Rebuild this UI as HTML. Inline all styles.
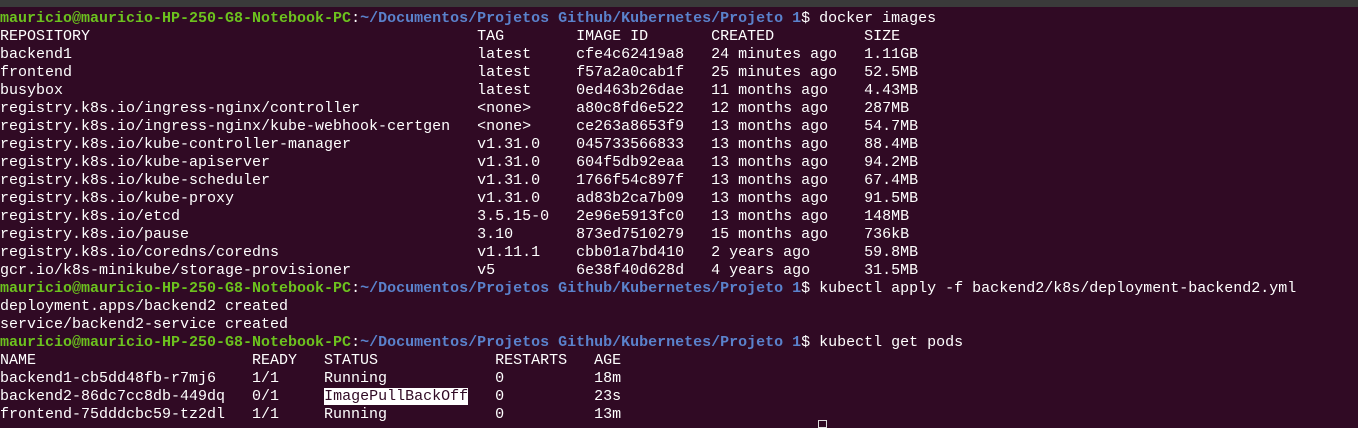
<!DOCTYPE html>
<html><head><meta charset="utf-8"><style>
html,body{margin:0;padding:0;}
body{width:1358px;height:424px;background:#300a24;overflow:hidden;position:relative;}
.top{position:absolute;left:0;top:0;width:1358px;height:7px;background:#3a3a3a;}
pre{position:absolute;left:0;top:10px;margin:0;font-family:"Liberation Mono",monospace;font-size:15px;line-height:18px;color:#ffffff;}
.g{color:#6cc21e;font-weight:bold;}
.b{color:#5a82cc;font-weight:bold;}
.hl{background:#ffffff;color:#300a24;}
.cur{position:absolute;left:818px;top:420px;width:9px;height:8px;border:1px solid #ddd;box-sizing:border-box;}
</style></head><body>
<div class="top"></div>
<pre><span class="g">mauricio@mauricio-HP-250-G8-Notebook-PC</span>:<span class="b">~/Documentos/Projetos Github/Kubernetes/Projeto 1</span>$ docker images
REPOSITORY                                           TAG        IMAGE ID       CREATED          SIZE
backend1                                             latest     cfe4c62419a8   24 minutes ago   1.11GB
frontend                                             latest     f57a2a0cab1f   25 minutes ago   52.5MB
busybox                                              latest     0ed463b26dae   11 months ago    4.43MB
registry.k8s.io/ingress-nginx/controller             &lt;none&gt;     a80c8fd6e522   12 months ago    287MB
registry.k8s.io/ingress-nginx/kube-webhook-certgen   &lt;none&gt;     ce263a8653f9   13 months ago    54.7MB
registry.k8s.io/kube-controller-manager              v1.31.0    045733566833   13 months ago    88.4MB
registry.k8s.io/kube-apiserver                       v1.31.0    604f5db92eaa   13 months ago    94.2MB
registry.k8s.io/kube-scheduler                       v1.31.0    1766f54c897f   13 months ago    67.4MB
registry.k8s.io/kube-proxy                           v1.31.0    ad83b2ca7b09   13 months ago    91.5MB
registry.k8s.io/etcd                                 3.5.15-0   2e96e5913fc0   13 months ago    148MB
registry.k8s.io/pause                                3.10       873ed7510279   15 months ago    736kB
registry.k8s.io/coredns/coredns                      v1.11.1    cbb01a7bd410   2 years ago      59.8MB
gcr.io/k8s-minikube/storage-provisioner              v5         6e38f40d628d   4 years ago      31.5MB
<span class="g">mauricio@mauricio-HP-250-G8-Notebook-PC</span>:<span class="b">~/Documentos/Projetos Github/Kubernetes/Projeto 1</span>$ kubectl apply -f backend2/k8s/deployment-backend2.yml
deployment.apps/backend2 created
service/backend2-service created
<span class="g">mauricio@mauricio-HP-250-G8-Notebook-PC</span>:<span class="b">~/Documentos/Projetos Github/Kubernetes/Projeto 1</span>$ kubectl get pods
NAME                        READY   STATUS             RESTARTS   AGE
backend1-cb5dd48fb-r7mj6    1/1     Running            0          18m
backend2-86dc7cc8db-449dq   0/1     <span class="hl">ImagePullBackOff</span>   0          23s
frontend-75dddcbc59-tz2dl   1/1     Running            0          13m
</pre>
<div class="cur"></div>
</body></html>
